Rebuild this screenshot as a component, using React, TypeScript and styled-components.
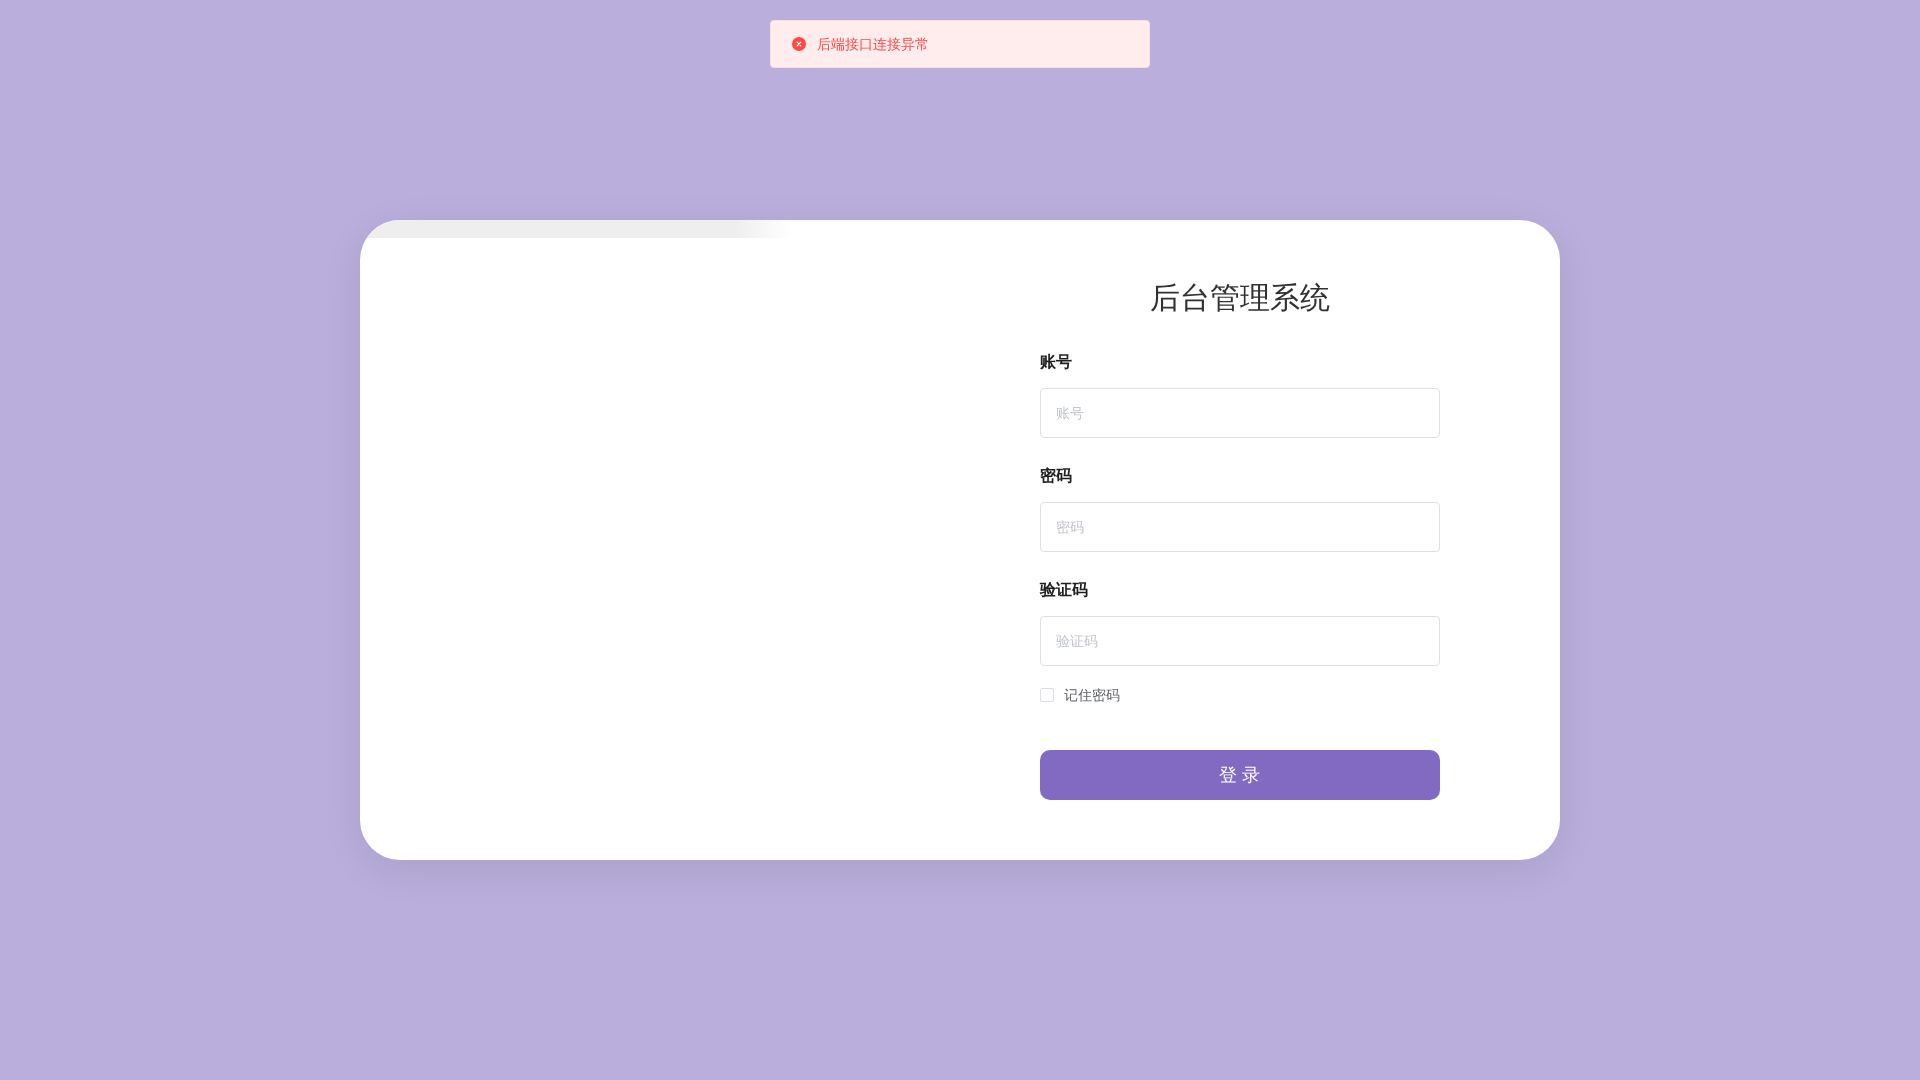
import React from "react";
import styled, { createGlobalStyle } from "styled-components";

const Global = createGlobalStyle`
  html, body { margin: 0; padding: 0; }
  body {
    font-family: "Liberation Sans", Arial, sans-serif;
    background: #b9aedc;
    text-rendering: geometricPrecision;
  }
  * { box-sizing: border-box; }
`;

const Page = styled.div`
  min-height: 100vh;
  display: flex;
  align-items: center;
  justify-content: center;
  background: #b9aedc;
`;

const Message = styled.div`
  position: fixed;
  top: 20px;
  left: 50%;
  transform: translateX(-50%);
  will-change: transform, opacity;
  width: 380px;
  height: 48px;
  display: flex;
  align-items: center;
  gap: 11px;
  padding: 0 20px 0 21px;
  background: #ffeded;
  border: 1px solid #ffdbdb;
  border-radius: 4px;
  color: #ff4949;
  font-size: 14px;
`;

const MessageText = styled.span`
  padding-top: 2px;
`;

const Card = styled.div`
  width: 1200px;
  height: 640px;
  display: flex;
  background: #fff;
  border-radius: 40px;
  overflow: hidden;
  will-change: transform, opacity;
  box-shadow: 0 10px 40px rgba(0, 0, 0, 0.08);
`;

const Visual = styled.div`
  flex: 1;
`;

const Shimmer = styled.div`
  width: 440px;
  height: 18px;
  background: linear-gradient(90deg, #eeeeee 0, #eeeeee 85%, #ffffff 98%);
`;

const Form = styled.form`
  width: 400px;
  margin-right: 120px;
  padding-top: 60px;
`;

const Title = styled.h1`
  margin: 0 0 33px;
  padding-top: 1px;
  height: 36px;
  font-size: 30px;
  line-height: 36px;
  font-weight: 400;
  text-align: center;
  color: #303133;
`;

const Field = styled.div`
  margin-bottom: 25px;
  &:last-of-type { margin-bottom: 20px; }
`;

const Label = styled.label`
  display: block;
  padding-top: 2px;
  margin-bottom: 13px;
  font-size: 16px;
  line-height: 24px;
  font-weight: 700;
  color: #1f1f1f;
`;

const Input = styled.input`
  display: block;
  width: 100%;
  height: 50px;
  padding: 0 15px;
  border: 1px solid #dcdfe6;
  border-radius: 4px;
  background: #fff;
  font: inherit;
  font-size: 14px;
  outline: none;
  &::placeholder { color: #c0c4cc; }
`;

const Remember = styled.label`
  display: flex;
  align-items: center;
  gap: 10px;
  height: 18px;
  margin-bottom: 46px;
  font-size: 14px;
  color: #606266;
`;

const RememberText = styled.span`
  padding-top: 2px;
`;

const Box = styled.span`
  width: 14px;
  height: 14px;
  background: #fff;
  border: 1px solid #dcdfe6;
  border-radius: 2px;
`;

const Submit = styled.button`
  display: block;
  width: 100%;
  height: 50px;
  border: 0;
  border-radius: 10px;
  background: #8269c1;
  color: #fff;
  font: inherit;
  font-size: 18px;
`;

const ErrorIcon = () => (
  <svg width="14" height="14" viewBox="0 0 14 14" aria-hidden="true">
    <circle cx="7" cy="7" r="7" fill="#ff4949" />
    <path d="M5.2 5.2l3.6 3.6M8.8 5.2l-3.6 3.6" stroke="#fff" strokeWidth="1.2" strokeLinecap="round" />
  </svg>
);

const fields = ["账号", "密码", "验证码"];

export default function App() {
  return (
    <Page>
      <Global />
      <Message>
        <ErrorIcon />
        <MessageText>后端接口连接异常</MessageText>
      </Message>
      <Card>
        <Visual>
          <Shimmer />
        </Visual>
        <Form>
          <Title>后台管理系统</Title>
          {fields.map((f) => (
            <Field key={f}>
              <Label>{f}</Label>
              <Input placeholder={f} />
            </Field>
          ))}
          <Remember>
            <Box />
            <RememberText>记住密码</RememberText>
          </Remember>
          <Submit type="button">登 录</Submit>
        </Form>
      </Card>
    </Page>
  );
}
